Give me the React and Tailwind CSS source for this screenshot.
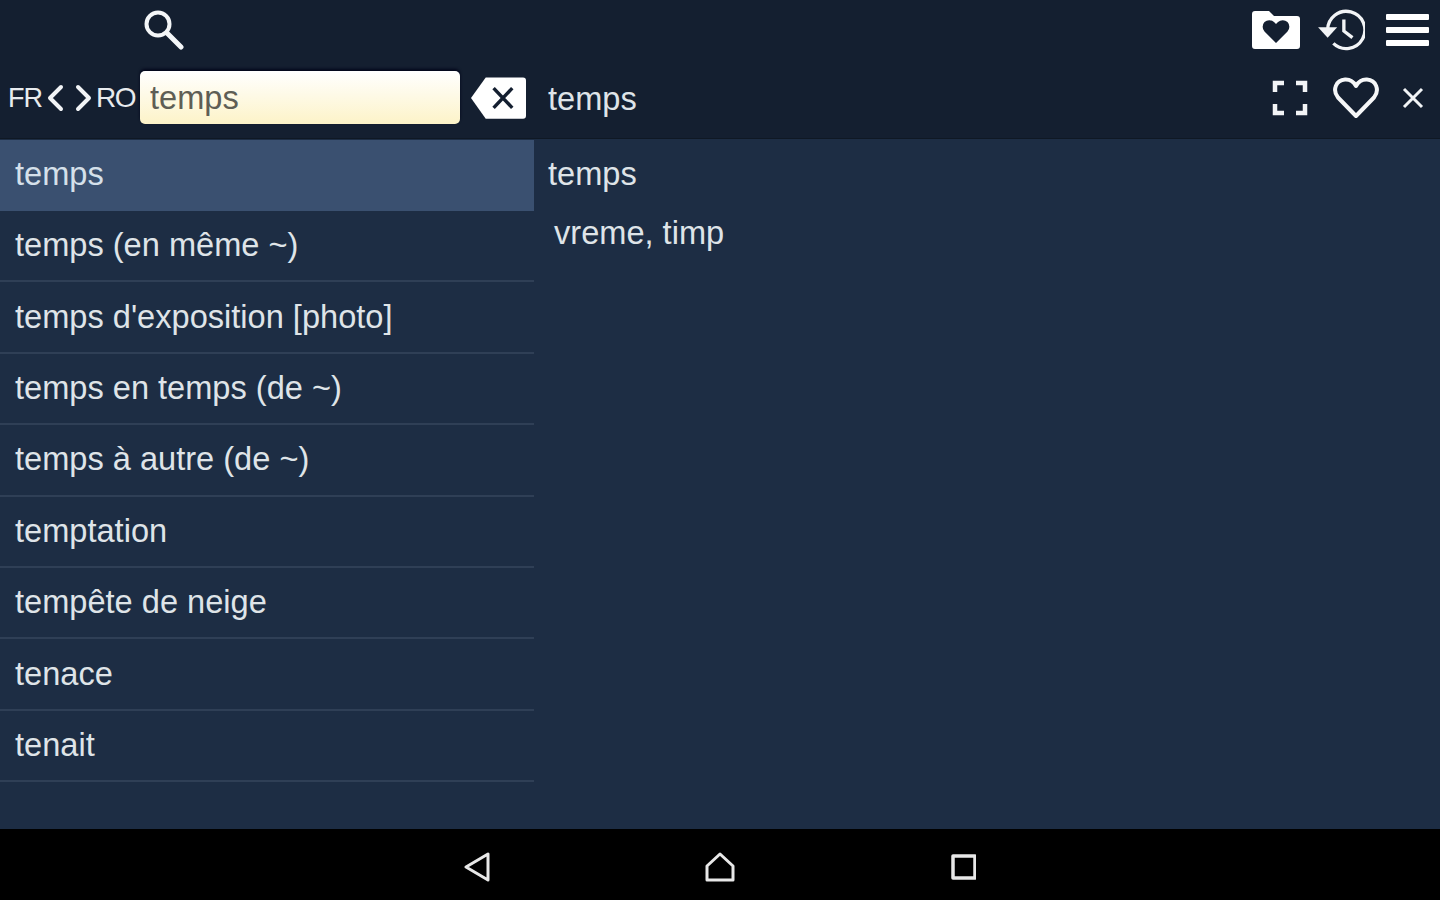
const words = [
  "temps",
  "temps (en même ~)",
  "temps d'exposition [photo]",
  "temps en temps (de ~)",
  "temps à autre (de ~)",
  "temptation",
  "tempête de neige",
  "tenace",
  "tenait",
];

function SearchIcon() {
  return (
    <svg width="42" height="42" viewBox="0 0 42 42" fill="none" stroke="#f4f6f8" strokeLinecap="round">
      <circle cx="16" cy="16" r="11.5" strokeWidth="4" />
      <path d="M25 25l14 14" strokeWidth="5" />
    </svg>
  );
}

function FolderHeart() {
  return (
    <svg width="48" height="38" viewBox="0 0 48 38">
      <path d="M3 0h14l5 5h23a3 3 0 0 1 3 3v27a3 3 0 0 1-3 3H3a3 3 0 0 1-3-3V3a3 3 0 0 1 3-3z" fill="#fff" />
      <path d="M24 32L12.5 20.500a7 7 0 0 1 0-9.500 7 7 0 0 1 9.500 0l2 2 2-2a7 7 0 0 1 9.500 0 7 7 0 0 1 0 9.500z" fill="#141f30" />
    </svg>
  );
}

function HistoryIcon() {
  return (
    <svg width="48" height="42" viewBox="0 0 50 44" fill="none" stroke="#f2f4f6" strokeWidth="3.5">
      <path d="M11 22a19.5 19.5 0 1 1 6 14" />
      <path d="M1 19h20l-10 11z" fill="#f2f4f6" stroke="none" />
      <path d="M28 11v12l9 7" />
    </svg>
  );
}

function MenuIcon() {
  return (
    <div className="flex w-[43px] flex-col gap-[7px]">
      <div className="h-[6px] rounded-[1px] bg-white" />
      <div className="h-[6px] rounded-[1px] bg-white" />
      <div className="h-[6px] rounded-[1px] bg-white" />
    </div>
  );
}

function Chevron({ flip }) {
  return (
    <svg width="18" height="28" viewBox="0 0 18 28" fill="none" stroke="#f2f4f6" strokeWidth="4" strokeLinecap="round" strokeLinejoin="round" className={flip ? "rotate-180" : ""}>
      <path d="M15 3L4 14l11 11" />
    </svg>
  );
}

function BackspaceIcon() {
  return (
    <svg width="55" height="42" viewBox="0 0 56 42">
      <path d="M15 0h38a3 3 0 0 1 3 3v36a3 3 0 0 1-3 3H15L0 21z" fill="#fff" />
      <path d="M23 11l19 20M42 11L23 31" stroke="#141f30" strokeWidth="3.5" fill="none" />
    </svg>
  );
}

function FullscreenIcon() {
  return (
    <svg width="36" height="36" viewBox="0 0 36 36" fill="none" stroke="#f2f4f6" strokeWidth="4.5">
      <path d="M3 12V3h9M24 3h9v9M33 24v9h-9M12 33H3v-9" />
    </svg>
  );
}

function HeartIcon() {
  return (
    <svg width="46" height="42" viewBox="0 0 46 42" fill="none" stroke="#f6f7f8" strokeWidth="4" strokeLinejoin="round">
      <path d="M23 39L5 20.500C-1 13 3 3 12 2.500c5-.3 8.500 2 11 6.500 2.500-4.500 6-6.800 11-6.500 9 .5 13 10.500 7 18z" />
    </svg>
  );
}

function CloseIcon() {
  return (
    <svg width="22" height="22" viewBox="0 0 22 22" stroke="#f2f4f6" strokeWidth="3" fill="none">
      <path d="M2 2l18 18M20 2L2 20" />
    </svg>
  );
}

function NavIcons() {
  return (
    <div className="flex h-[71px] items-center justify-center gap-[215px] bg-black pt-[5px]">
      <svg width="26" height="30" viewBox="0 0 26 30" fill="none" stroke="#e8e8e8" strokeWidth="3" strokeLinejoin="round">
        <path d="M24 2v26L2 15z" />
      </svg>
      <svg width="30" height="30" viewBox="0 0 30 30" fill="none" stroke="#e8e8e8" strokeWidth="3" strokeLinejoin="round">
        <path d="M15 2L2 14v14h26V14z" />
      </svg>
      <svg width="26" height="26" viewBox="0 0 26 26" fill="none" stroke="#e8e8e8" strokeWidth="3.5" strokeLinejoin="round">
        <path d="M3 2h22v22H3z" />
      </svg>
    </div>
  );
}

export default function App() {
  return (
    <div className="flex h-[900px] w-[1440px] flex-col overflow-hidden bg-[#1d2d44] font-['Liberation_Sans',Arial,sans-serif] text-[32.6px] text-[#dfe4e8]">
      <header className="h-[139px] shrink-0 border-b border-[#0f1824] bg-[#141f30]">
        <div className="flex h-[60px] items-center pb-[1px] pl-[142px] pr-[11px]">
          <div className="mb-[2px]"><SearchIcon /></div>
          <div className="ml-auto flex items-center">
            <FolderHeart />
            <div className="ml-[17px]"><HistoryIcon /></div>
            <div className="ml-[21px]"><MenuIcon /></div>
          </div>
        </div>
        <div className="flex h-[78px] items-center pb-[2px]">
          <div className="flex w-[534px] items-center pl-[8px]">
            <span className="w-[38px] text-[27px] tracking-[-1px] text-[#e8ebee]">FR</span>
            <Chevron />
            <span className="w-[11px]" />
            <Chevron flip />
            <span className="ml-[3px] w-[44px] text-[28px] tracking-[-1.5px] text-[#e8ebee]">RO</span>
            <div className="-mt-[2px] flex h-[53px] w-[320px] items-center rounded-[5px] bg-gradient-to-b from-white to-[#fdf3c8] pl-[10px] pt-[3px] text-[#5f5e55] shadow-[0_-2px_3px_#02051a]">
              temps
            </div>
            <div className="ml-[11px]"><BackspaceIcon /></div>
          </div>
          <span className="ml-[14px] pt-[2px]">temps</span>
          <div className="ml-auto flex items-center pr-[16px]">
            <FullscreenIcon />
            <div className="ml-[25px]"><HeartIcon /></div>
            <div className="ml-[23px]"><CloseIcon /></div>
          </div>
        </div>
      </header>
      <main className="flex min-h-0 flex-1">
        <ul className="w-[534px] shrink-0 pt-[0.6px]">
          {words.map((word, i) => (
            <li
              key={word}
              className={`flex h-[71.4px] items-center border-b-2 pl-[15px] ${
                i === 0 ? "border-transparent bg-[#3a5070] text-[#d5e0ea]" : "border-[#2f3f56]"
              }`}
            >
              {word}
            </li>
          ))}
        </ul>
        <div className="flex-1 pl-[14px]">
          <div className="flex h-[71px] items-center">temps</div>
          <div className="pl-[6px] leading-[46px]">vreme, timp</div>
        </div>
      </main>
      <NavIcons />
    </div>
  );
}
